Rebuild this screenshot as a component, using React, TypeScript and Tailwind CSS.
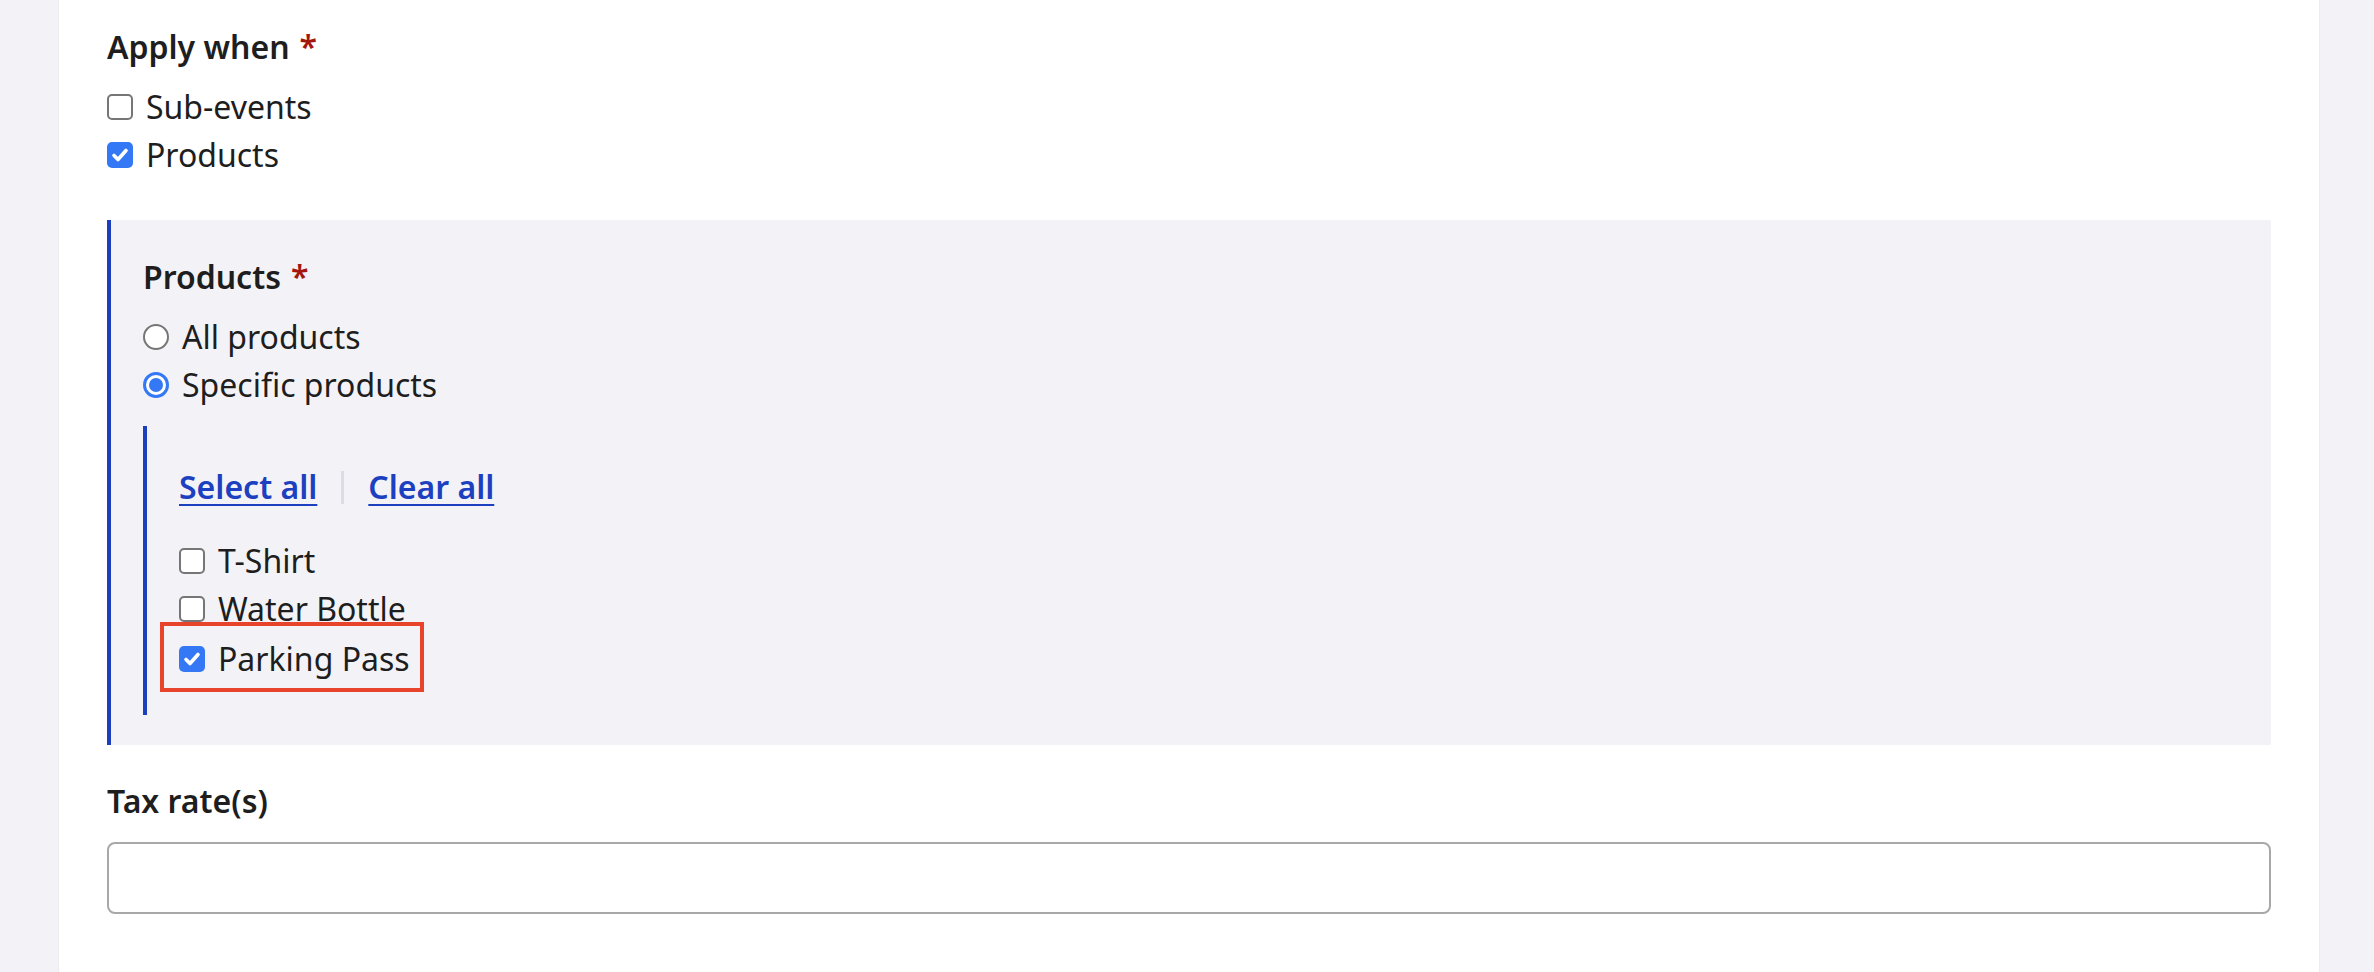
import { ReactNode } from "react";

const Box = ({ checked }: { checked?: boolean }) =>
  checked ? (
    <span className="w-[26px] h-[26px] rounded-[5px] bg-[#3478f6] flex items-center justify-center shrink-0">
      <svg width={20} height={20} viewBox="0 0 20 20" fill="none">
        <path d="M4 10.5l4 4 8-9" stroke="#fff" strokeWidth={3.6} strokeLinecap="round" strokeLinejoin="round" />
      </svg>
    </span>
  ) : (
    <span className="w-[26px] h-[26px] rounded-[5px] border-2 border-[#767676] bg-white shrink-0" />
  );

const Radio = ({ checked }: { checked?: boolean }) =>
  checked ? (
    <span className="w-[26px] h-[26px] rounded-full border-[3px] border-[#3478f6] bg-white flex items-center justify-center shrink-0">
      <span className="w-[14px] h-[14px] rounded-full bg-[#3478f6]" />
    </span>
  ) : (
    <span className="w-[26px] h-[26px] rounded-full border-2 border-[#767676] bg-white shrink-0" />
  );

const Row = ({ control, children }: { control: ReactNode; children: ReactNode }) => (
  <div className="flex items-center gap-[13px] h-12">
    {control}
    <span>{children}</span>
  </div>
);

const Label = ({ children, required }: { children: ReactNode; required?: boolean }) => (
  <div className="h-12 flex items-center font-semibold">
    {children}
    {required && <span className="text-[#a3160e] ml-[10px]">*</span>}
  </div>
);

const App = () => {
  return (
    <div
      className="flex h-[972px] bg-[#f3f3f7] pl-[58px] pr-[54px] text-[32px] leading-[48px] text-[#1e1e1e]"
      style={{ fontFamily: '"Noto Sans", "Open Sans", sans-serif' }}
    >
      <div className="flex-1 bg-white border-x border-[#ebebf0] px-12 pt-[23px]">
        <Label required>Apply when</Label>
        <div className="mt-3">
          <Row control={<Box />}>Sub-events</Row>
          <Row control={<Box checked />}>Products</Row>
        </div>

        <div className="mt-[41px] bg-[#f3f3f7] border-l-4 border-[#1c3fbe] pl-8 pr-8 pt-[33px] pb-[30px]">
          <Label required>Products</Label>
          <div className="mt-[12px]">
            <Row control={<Radio />}>All products</Row>
            <Row control={<Radio checked />}>Specific products</Row>
          </div>

          <div className="mt-[17px] border-l-4 border-[#1c3fbe] pl-8 pt-[37px] pb-8">
            <div className="flex items-center h-12 font-semibold text-[#1c40c0]">
              <a className="underline underline-offset-[5px] decoration-2">Select all</a>
              <span className="w-[3px] h-[33px] bg-[#dcdce4] mx-[24px]" />
              <a className="underline underline-offset-[5px] decoration-2">Clear all</a>
            </div>
            <div className="mt-[26px]">
              <Row control={<Box />}>T-Shirt</Row>
              <Row control={<Box />}>Water Bottle</Row>
              <div className="relative inline-block">
                <Row control={<Box checked />}>Parking Pass</Row>
                <div className="absolute top-[-13px] left-[-19px] w-[264px] h-[70px] border-4 border-[#e8432b]" />
              </div>
            </div>
          </div>
        </div>

        <div className="mt-8">
          <Label>Tax rate(s)</Label>
        </div>
        <div className="mt-[17px] h-[72px] rounded-[8px] border-2 border-[#a8a8a8] bg-white" />
      </div>
    </div>
  );
};

export default App;
